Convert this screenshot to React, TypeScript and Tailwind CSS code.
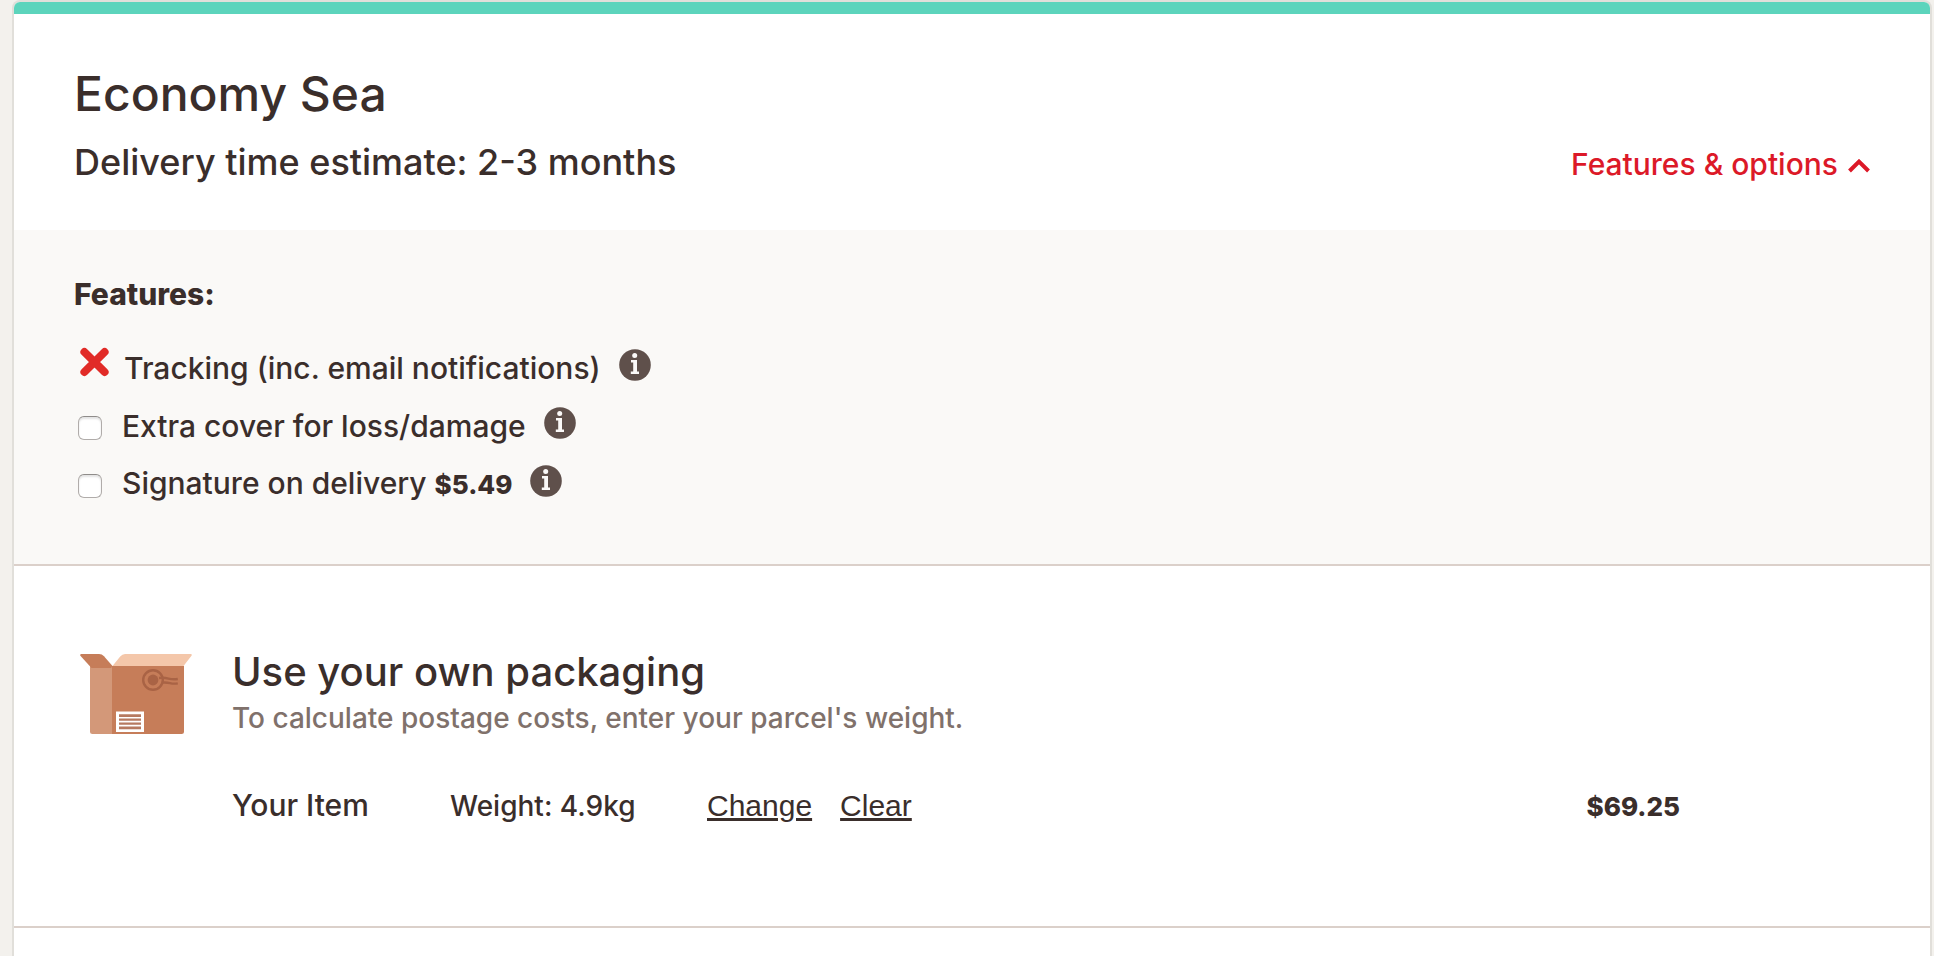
import { useState } from "react";

interface Feature {
  id: string;
  label: string;
  price?: string;
  available: boolean;
}

const features: Feature[] = [
  { id: "tracking", label: "Tracking (inc. email notifications)", available: false },
  { id: "cover", label: "Extra cover for loss/damage", available: true },
  { id: "signature", label: "Signature on delivery", price: "$5.49", available: true },
];

function ChevronIcon() {
  return (
    <svg width="22" height="14" viewBox="0 0 22 14" fill="none" aria-hidden="true">
      <path d="M1.5 12 11 2.6 20.5 12" stroke="currentColor" strokeWidth="4" />
    </svg>
  );
}

function CrossIcon() {
  return (
    <svg width="30" height="30" viewBox="0 0 30 30" role="img" aria-label="Not included" className="mb-3 shrink-0">
      <path d="M4.4 5 24.600 25M24.600 5 4.400 25" stroke="#e12b27" strokeWidth="8" strokeLinecap="round" />
    </svg>
  );
}

function InfoIcon() {
  return (
    <svg width="32" height="32" viewBox="0 0 32 32" aria-hidden="true">
      <circle cx="16" cy="16" r="15.8" fill="#5f504b" />
      <circle cx="15.7" cy="6.6" r="2.5" fill="#fbf9f8" />
      <path d="M12 11h6v11.6h2V25h-8.2v-2.4h2.4v-9H12z" fill="#fbf9f8" />
    </svg>
  );
}

function BoxIcon() {
  return (
    <svg width="112" height="80" viewBox="0 0 112 80" aria-hidden="true" className="shrink-0">
      {/* Side and front */}
      <path d="M10 12h23v68H12.500a2.500 2.500 0 0 1-2.500-2.500z" fill="#d39879" />
      <path d="M32 12h72v65.500a2.500 2.500 0 0 1-2.500 2.500H32z" fill="#c67d59" />
      {/* Flaps */}
      <path d="M1.500 0H19q3 0 5 2.200L32.500 12 31 14H11.500L.4 1.800Q-.4 0 1.500 0z" fill="#c67d59" />
      <path d="M45 0h65.500q2 0 1 1.800L103.500 12H32.500L40.200 2.600Q42.200 0 45 0z" fill="#f4c7aa" />
      {/* Postmark */}
      <g fill="none" stroke="#a96345" strokeWidth="2.400">
        <circle cx="73" cy="26" r="9.800" />
        <path d="M79 24q5-.6 9.500.6t9.300.4M82 28.600q4-.5 8 .5t7.800.2" />
      </g>
      <circle cx="73" cy="26" r="5.400" fill="#a96345" />
      {/* Address label */}
      <path d="M36 57.500h28V78H36z" fill="#fff" />
      <path d="M39 60.200h22v2.800H39zm0 4.200h22v2.400H39zm0 4h22v2.400H39zm0 4.200h22v2.600H39z" fill="#a96345" opacity=".85" />
    </svg>
  );
}

function FeatureRow({ id, label, price, available }: Feature) {
  const text = (
    <>
      {label} {price && <strong className="text-[26px] font-extrabold">{price}</strong>}
    </>
  );

  return (
    <li className="flex h-[58px] items-center">
      {available ? (
        <>
          <input
            id={id}
            type="checkbox"
            className="mt-1 ml-1 size-6 shrink-0 appearance-none rounded-md border border-[#b0acaa] border-t-[#8f8c8a] bg-white shadow-[inset_0_2px_2px_#e4e4e4] checked:bg-[#dc1928]"
          />
          <label htmlFor={id} className="ml-5">
            {text}
          </label>
        </>
      ) : (
        <>
          <span className="ml-[6px] shrink-0">
            <CrossIcon />
          </span>
          <span className="ml-[14px]">{text}</span>
        </>
      )}
      <button type="button" aria-label={`About ${label}`} className="mb-[6px] ml-[18px] shrink-0">
        <InfoIcon />
      </button>
    </li>
  );
}

export default function App() {
  const [open, setOpen] = useState(true);

  return (
    <div className="min-h-screen bg-[#f3f1ed] pr-[2px] pl-3 font-['Inter',sans-serif] text-[30px] leading-9 font-medium text-[#3a2e2b]">
      <main className="min-h-screen overflow-hidden rounded-t-lg border-2 border-b-0 border-[#e1dfda] bg-white">
        <div className="h-3 bg-[#5cd4bc]" />

        <header className="px-[60px] pt-[50px] pb-11">
          <h1 className="text-[48px] leading-[60px]">Economy Sea</h1>
          <div className="mt-[14px] flex items-baseline justify-between">
            <p className="text-[36px] leading-[48px]">Delivery time estimate: 2-3 months</p>
            <button
              type="button"
              aria-expanded={open}
              onClick={() => setOpen(!open)}
              className="flex items-center gap-[10px] text-[#dc1928]"
            >
              Features &amp; options
              <span className={open ? "mt-1" : "rotate-180"}>
                <ChevronIcon />
              </span>
            </button>
          </div>
        </header>

        {open && (
          <section className="bg-[#faf9f7] px-[60px] pt-[46px] pb-[51px]">
            <h2 className="font-extrabold">Features:</h2>
            <ul className="mt-[27px]">
              {features.map((feature) => (
                <FeatureRow key={feature.id} {...feature} />
              ))}
            </ul>
          </section>
        )}

        <section className="flex border-y-2 border-[#dbd0ca] pt-[82px] pb-[97px] pl-[66px]">
          <div className="mt-[6px] mr-10 shrink-0">
            <BoxIcon />
          </div>
          <div className="flex-1">
            <h2 className="text-[40px] leading-[48px]">Use your own packaging</h2>
            <p className="mt-1 text-[28px] text-[#80716b]">To calculate postage costs, enter your parcel's weight.</p>
            <div className="mt-[47px] flex items-baseline leading-[44px]">
              <span className="w-[218px]">Your Item</span>
              <span className="w-[257px] text-[28px]">Weight: 4.9kg</span>
              <span className="flex gap-7 font-['Liberation_Sans',sans-serif] font-normal">
                <a href="#change" className="underline underline-offset-2">
                  Change
                </a>
                <a href="#clear" className="underline underline-offset-2">
                  Clear
                </a>
              </span>
              <strong className="mr-[250px] ml-auto text-[26px] font-extrabold">$69.25</strong>
            </div>
          </div>
        </section>
      </main>
    </div>
  );
}
